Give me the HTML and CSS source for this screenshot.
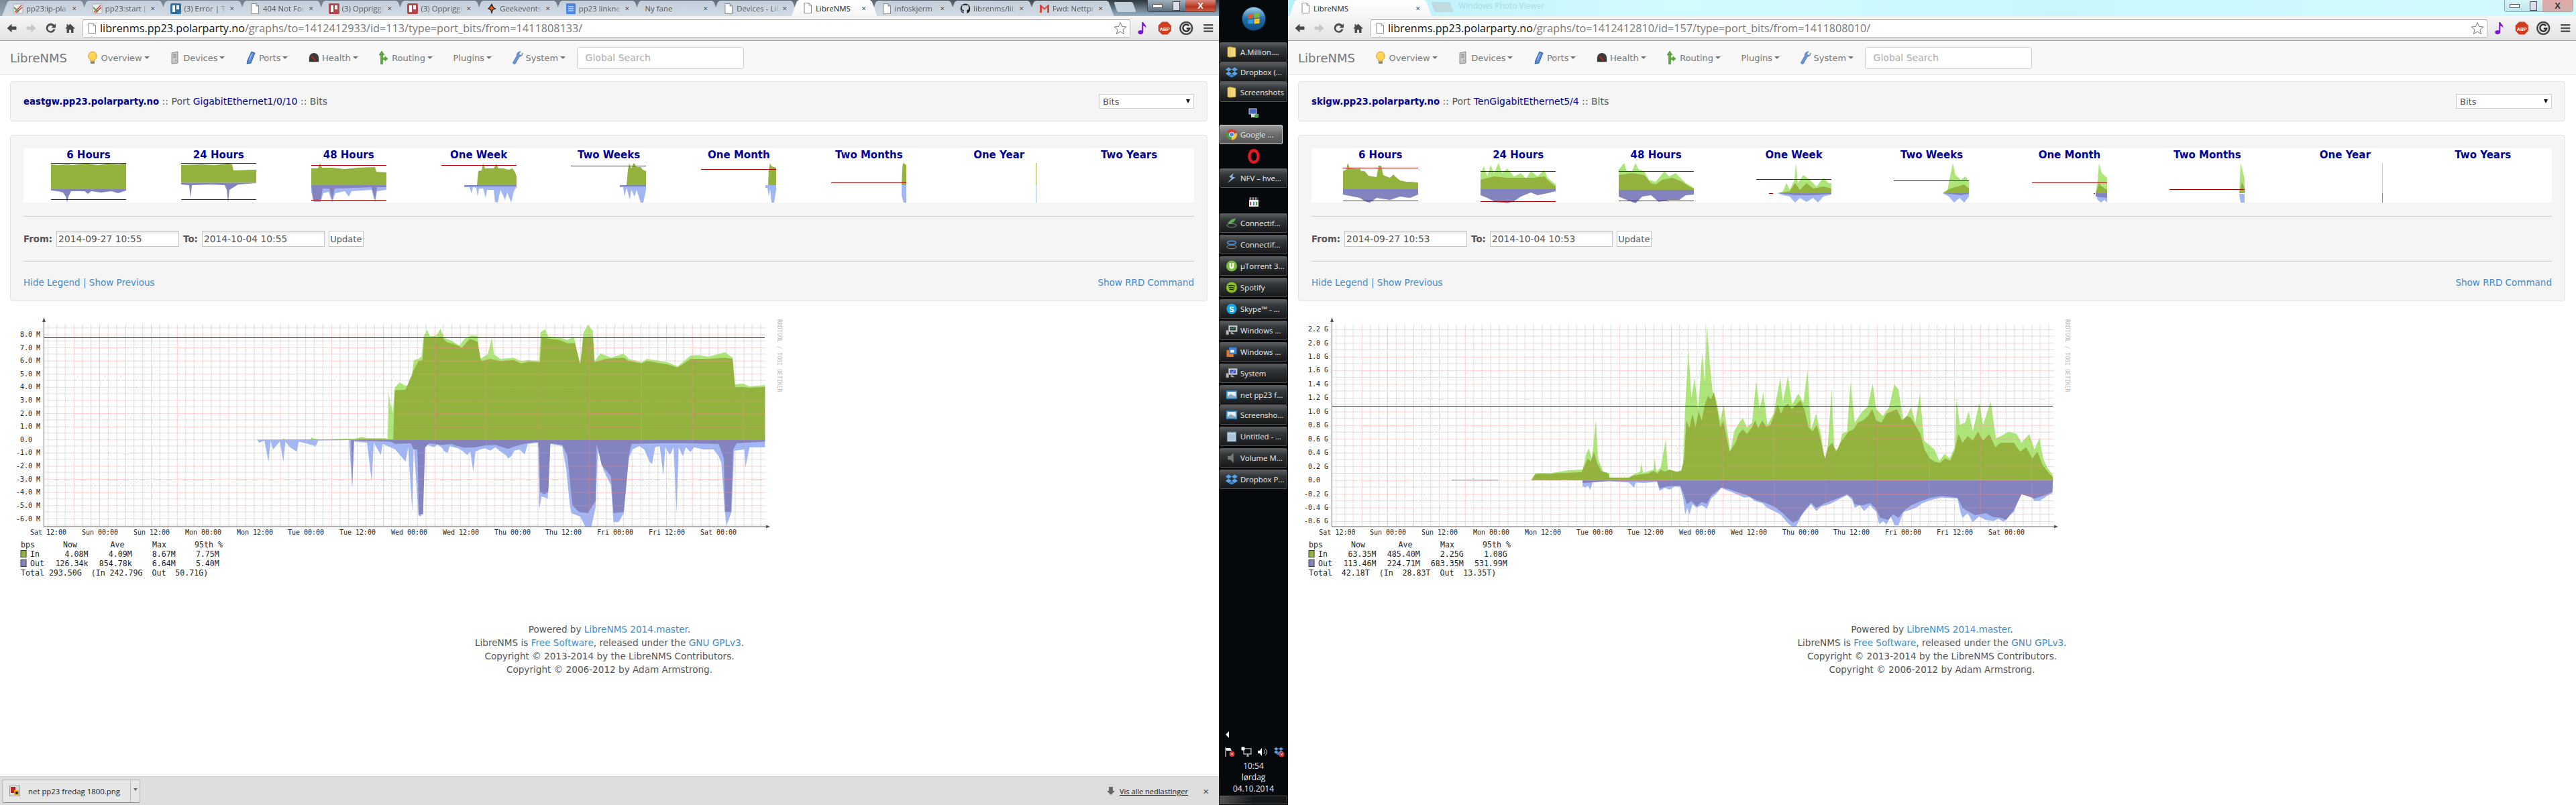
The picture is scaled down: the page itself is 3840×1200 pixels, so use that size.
FILE: index.html
```html
<!DOCTYPE html>
<html lang="no">
<head>
<meta charset="utf-8">
<title>LibreNMS</title>
<link rel="stylesheet" href="styles.css">
</head>
<body>
<svg class="defs" width="0" height="0" aria-hidden="true">
  <defs>
    <symbol id="i-back" viewBox="0 0 16 16"><path d="M1 8 8 1.5V5.5H15V10.5H8V14.5Z"/></symbol>
    <symbol id="i-fwd" viewBox="0 0 16 16"><path d="M15 8 8 1.5V5.5H1V10.5H8V14.5Z"/></symbol>
    <symbol id="i-reload" viewBox="0 0 16 16"><path d="M13.5 3.2A7 7 0 1 0 15 9.5H12A4.2 4.2 0 1 1 11.2 5.4L8.8 7.6H15.5V1Z"/></symbol>
    <symbol id="i-home" viewBox="0 0 16 16"><path d="M8 1.5 15.5 8.5H13V15H9.5V10.5H6.5V15H3V8.5H.5L3 6.2V2H5V4.4Z"/></symbol>
    <symbol id="i-page" viewBox="0 0 16 16"><path d="M3 .5H10L13.5 4V15.5H3Z M10 .5V4H13.5" fill="#fff" stroke="#888"/></symbol>
    <symbol id="i-star" viewBox="0 0 20 20"><path d="M10 1.5 12.5 7.5 19 8 14 12.3 15.6 18.6 10 15.2 4.4 18.6 6 12.3 1 8 7.500 7.500Z" fill="#fff" stroke="#777"/></symbol>
    <symbol id="i-pencil" viewBox="0 0 16 16"><rect x="1" y="1" width="14" height="14" rx="1" fill="#eee" stroke="#aaa"/><path d="M3 13 13 3 M5 14 14 6" stroke="#c33" stroke-width="1.500"/><path d="M2 6 9 13" stroke="#4a4" stroke-width="2"/></symbol>
    <symbol id="i-tr" viewBox="0 0 16 16"><rect width="16" height="16" rx="2" fill="#2f6f9e"/><rect x="3" y="3" width="4" height="10" fill="#fff"/><rect x="9" y="3" width="4" height="6" fill="#fff"/></symbol>
    <symbol id="i-trr" viewBox="0 0 16 16"><rect width="16" height="16" rx="2" fill="#b04a4a"/><rect x="3" y="3" width="4" height="10" fill="#fff"/><rect x="9" y="3" width="4" height="6" fill="#fff"/></symbol>
    <symbol id="i-geek" viewBox="0 0 16 16"><path d="M8 0 11 6 15 8 10 10 8 16 6 10 2 8 5 5Z" fill="#1a1a1a"/><path d="M8 3 10 7 13 8 9 9 8 13 7 9 4 8 6 6Z" fill="#e8641c"/></symbol>
    <symbol id="i-doc" viewBox="0 0 16 16"><rect x="1" width="14" height="16" rx="1" fill="#4a86e8"/><path d="M4 5H12M4 8H12M4 11H12" stroke="#fff"/></symbol>
    <symbol id="i-gh" viewBox="0 0 16 16"><path d="M8 .5A7.500 7.500 0 0 0 5.500 15V12.500C3.500 13 3 11.500 3 11.500 2.500 10.500 2 10.200 2 10.200 1.400 9.700 2.100 9.700 2.100 9.700 3 9.800 3.400 10.600 3.400 10.600 4.200 12 5.500 11.500 5.700 11.200 5.800 10.600 6 10.300 6.200 10.100 4.400 9.900 2.800 9.100 2.800 6.400 2.800 5.500 3.100 4.900 3.600 4.400 3.500 4.200 3.300 3.500 3.700 2.500 3.700 2.500 4.400 2.300 5.800 3.200A6.500 6.500 0 0 1 10.200 3.200C11.600 2.300 12.300 2.500 12.300 2.500 12.700 3.500 12.500 4.200 12.400 4.400 12.900 4.900 13.200 5.500 13.200 6.400 13.200 9.100 11.600 9.900 9.800 10.100 10.100 10.400 10.400 10.900 10.400 11.700V15A7.500 7.500 0 0 0 8 .5Z" fill="#222"/></symbol>
    <symbol id="i-gmail" viewBox="0 0 16 16"><path d="M1 2V14H4V7L8 10.500 12 7V14H15V2H13.500L8 7 2.500 2Z" fill="#d2473a"/><path d="M4 7 8 10.500 12 7V6L8 9.500 4 6Z" fill="#f4c7c0"/></symbol>
    <symbol id="i-note" viewBox="0 0 16 20"><path d="M7 1H9C9.500 4 14 5 13 10 12.500 7.500 10.500 7 9 6.500V16A4 3 0 1 1 7 13.500Z" fill="#7a12d8"/></symbol>
    <symbol id="i-abp" viewBox="0 0 20 20"><path d="M6 .5H14L19.500 6V14L14 19.500H6L.5 14V6Z" fill="#cf3c1e"/><text x="10" y="13.500" class="abp-t">ABP</text></symbol>
    <symbol id="i-g" viewBox="0 0 20 20"><circle cx="10" cy="10" r="9" fill="#eee" stroke="#444" stroke-width="2.500"/><path d="M14 6.500A5 5 0 1 0 15 10.500H10.500" fill="none" stroke="#333" stroke-width="2.500"/></symbol>
    <symbol id="i-menu" viewBox="0 0 16 16"><path d="M1 2H15V4.500H1ZM1 6.800H15V9.300H1ZM1 11.500H15V14H1Z" fill="#555"/></symbol>
    <symbol id="i-bulb" viewBox="0 0 16 20"><path d="M8 1A6.500 6.500 0 0 0 4.800 13V15H11.200V13A6.500 6.500 0 0 0 8 1Z" fill="#fbd35a" stroke="#d9a02a"/><rect x="5" y="15.500" width="6" height="3.500" fill="#888"/></symbol>
    <symbol id="i-device" viewBox="0 0 16 20"><path d="M3 3 12 1V18L3 19Z" fill="#c8c8c8" stroke="#888"/><path d="M5 6H10M5 9H10" stroke="#777"/><circle cx="9" cy="14" r="1" fill="#4a4"/></symbol>
    <symbol id="i-port" viewBox="0 0 16 20"><path d="M9 1 14 3 8 18 2 19 3 14Z" fill="#5b8bd4" stroke="#2f5da5"/><path d="M9 5 6 13" stroke="#bcd4f5"/></symbol>
    <symbol id="i-health" viewBox="0 0 18 20"><path d="M1 17V10A8 8 0 0 1 17 10V17Z" fill="#3a3a3a"/><path d="M5 8 12 15" stroke="#d22" stroke-width="1.500"/></symbol>
    <symbol id="i-route" viewBox="0 0 14 20"><path d="M4 0 8 6H5.500V10L9 10V8L13 11.500 9 15V13H5.500V20H2.500V6H0Z" fill="#5da93c" stroke="#3a7d1f" stroke-width=".5"/></symbol>
    <symbol id="i-wrench" viewBox="0 0 16 20"><path d="M12 1 9.500 4 11 6.500 14 6.500 15 3A5 5 0 0 1 10 8.500L4.500 18.500A2 2 0 0 1 1 16.500L6.500 7A5 5 0 0 1 12 1Z" fill="#6f95d6" stroke="#3e67ad" stroke-width=".7"/></symbol>
    <symbol id="i-folder" viewBox="0 0 16 20"><path d="M1 2 5 1 15 3V18L5 19 1 18Z" fill="#f3d679" stroke="#c9a53e"/><path d="M5 1V19" stroke="#d8b552"/></symbol>
    <symbol id="i-dropbox" viewBox="0 0 20 18"><path d="M5 1 10 4.500 5 8 0 4.500ZM15 1 20 4.500 15 8 10 4.500ZM5 8 10 11.500 5 15 0 11.500ZM15 8 20 11.500 15 15 10 11.500Z" fill="#5aa6ee"/><path d="M5 15.500 10 12.500 15 15.500 10 18Z" fill="#3a86d6"/></symbol>
    <symbol id="i-net" viewBox="0 0 16 16"><rect x="1" y="1" width="11" height="8" fill="#4668c0" stroke="#ccc"/><rect x="4" y="9" width="11" height="5" fill="#ddd"/><circle cx="12" cy="12" r="3" fill="#4a4"/></symbol>
    <symbol id="i-chrome" viewBox="0 0 20 20"><circle cx="10" cy="10" r="9.500" fill="#d33b30"/><path d="M10 10 19 7A9.500 9.500 0 0 1 10 19.500Z" fill="#f6c631"/><path d="M10 10 10 19.500A9.500 9.500 0 0 1 1.500 6Z" fill="#3ba14a"/><circle cx="10" cy="10" r="4.500" fill="#fff"/><circle cx="10" cy="10" r="3.500" fill="#4a86e8"/></symbol>
    <symbol id="i-opera" viewBox="0 0 16 20"><ellipse cx="8" cy="10" rx="6" ry="8" fill="none" stroke="#e01a22" stroke-width="4"/></symbol>
    <symbol id="i-nfv" viewBox="0 0 18 18"><path d="M12 1 5 7 9 9 2 17 15 8 10 7Z" fill="#8fb4dc"/></symbol>
    <symbol id="i-clap" viewBox="0 0 16 16"><rect x="1" y="5" width="14" height="10" fill="#eee"/><path d="M1 1H15V5H1Z" fill="#333"/><path d="M3 1V5M7 1V5M11 1V5" stroke="#eee"/><path d="M3 8V13" stroke="#d33" stroke-width="2"/><path d="M8 8V13" stroke="#38c" stroke-width="2"/><path d="M12 8V13" stroke="#3a3" stroke-width="2"/></symbol>
    <symbol id="i-conn" viewBox="0 0 20 18"><ellipse cx="10" cy="13" rx="8" ry="3" fill="none" stroke="#999"/><path d="M3 9 10 3 17 1 14 7 7 10Z" fill="#5fa85a"/></symbol>
    <symbol id="i-conn2" viewBox="0 0 20 18"><ellipse cx="10" cy="13" rx="8" ry="3" fill="none" stroke="#999"/><ellipse cx="10" cy="6" rx="7" ry="3" fill="none" stroke="#4a86c8" stroke-width="2"/></symbol>
    <symbol id="i-utorrent" viewBox="0 0 20 20"><circle cx="10" cy="10" r="9.500" fill="#7dbb3f"/><path d="M6 5V11A4 4 0 0 0 14 11V5H11V11A1 1 0 0 1 9 11V5Z" fill="#fff"/></symbol>
    <symbol id="i-spotify" viewBox="0 0 20 20"><circle cx="10" cy="10" r="9.500" fill="#8cc11f"/><path d="M4 7C8 6 13 6 16 8M5 10.500C8 9.500 12 10 15 11.500M6 13.500C9 13 11 13 14 14.500" fill="none" stroke="#1c1c1c" stroke-width="1.600"/></symbol>
    <symbol id="i-skype" viewBox="0 0 20 20"><circle cx="10" cy="10" r="9" fill="#13a8e8"/><text x="10" y="15" class="skype-t">S</text></symbol>
    <symbol id="i-monitor" viewBox="0 0 20 18"><rect x="5" y="1" width="14" height="10" fill="#ddd" stroke="#999"/><rect x="7" y="3" width="10" height="6" fill="#234"/><path d="M8 7 10 5 12 7 14 4 16 6" stroke="#5d5" fill="none"/><path d="M1 9H5V16H1ZM9 11V15H15" fill="#bbb" stroke="#888"/></symbol>
    <symbol id="i-vmware" viewBox="0 0 18 18"><rect x="1" y="6" width="11" height="11" fill="#e8761c"/><rect x="5" y="2" width="12" height="11" fill="#3a82d6"/><rect x="7" y="6" width="6" height="4" fill="#fff"/></symbol>
    <symbol id="i-sys" viewBox="0 0 20 18"><rect x="5" y="1" width="14" height="10" fill="#ddd" stroke="#999"/><rect x="7" y="3" width="10" height="6" fill="#3455c8"/><path d="M9 6 11 8 15 4" stroke="#fff" fill="none"/><path d="M1 9H5V16H1ZM9 11V15H15" fill="#bbb" stroke="#888"/></symbol>
    <symbol id="i-photo" viewBox="0 0 20 18"><rect x="1" y="2" width="18" height="14" fill="#2f8fcf"/><rect x="3" y="4" width="14" height="10" fill="#e8eef4"/><path d="M3 12 8 8 17 12V14H3Z" fill="#8aa8c4"/></symbol>
    <symbol id="i-notepad" viewBox="0 0 18 18"><rect x="2" y="2" width="14" height="15" fill="#bcd4e6" stroke="#789"/><path d="M2 2H16" stroke="#357" stroke-width="2" stroke-dasharray="1 1"/><path d="M4 7H14M4 10H14M4 13H14" stroke="#7a99b0"/></symbol>
    <symbol id="i-vol" viewBox="0 0 16 18"><path d="M2 6H6L11 1V17L6 12H2Z" fill="#777"/></symbol>
    <symbol id="i-png" viewBox="0 0 16 16"><rect x=".5" y=".5" width="15" height="15" fill="#ddd" stroke="#999"/><rect x="2" y="2" width="7" height="9" fill="#b5261c"/><rect x="7" y="7" width="7" height="7" fill="#e8a020"/><circle cx="11" cy="11" r="2" fill="#222"/></symbol>
    <symbol id="i-dl" viewBox="0 0 14 14"><path d="M4 1H10V7H13L7 13 1 7H4Z" fill="#666"/></symbol>
    <symbol id="i-flag" viewBox="0 0 16 16"><path d="M2 1V15" stroke="#fff"/><path d="M3 2H9L11 6H3Z" fill="#fff"/><circle cx="11.500" cy="11" r="4" fill="#d33"/><path d="M10 9.500 13 12.500M13 9.500 10 12.500" stroke="#fff"/></symbol>
    <symbol id="i-netw" viewBox="0 0 16 16"><rect x="4" y="3" width="11" height="8" fill="none" stroke="#fff"/><path d="M8 14H12M10 11V14M1 5H5V1H1Z" fill="#fff" stroke="#fff"/></symbol>
    <symbol id="i-spk" viewBox="0 0 16 16"><path d="M1 6H4L7 2V14L4 10H1Z" fill="#fff"/><path d="M10 5A4 4 0 0 1 10 11M12 3A7 7 0 0 1 12 13" stroke="#ccc" fill="none"/></symbol>
    <symbol id="i-dbx" viewBox="0 0 16 16"><use href="#i-dropbox" width="14" height="13"/><circle cx="11.500" cy="11.500" r="4" fill="#d33"/><path d="M10 10 13 13M13 10 10 13" stroke="#fff"/></symbol>
    <linearGradient id="orb" x1="0" y1="0" x2="0" y2="1"><stop offset="0" stop-color="#a9d3ec"/><stop offset=".5" stop-color="#1f6ea8"/><stop offset="1" stop-color="#0f4e80"/></linearGradient>
  </defs>
</svg>

<!-- LEFT BROWSER -->
<section class="win win-left">
  <div class="strip strip-dark">
    <div class="tab"><svg class="fav"><use href="#i-pencil"/></svg><span class="tab-t">pp23:ip-pla</span><span class="tab-x">✕</span></div>
    <div class="tab"><svg class="fav"><use href="#i-pencil"/></svg><span class="tab-t">pp23:start [I</span><span class="tab-x">✕</span></div>
    <div class="tab"><svg class="fav"><use href="#i-tr"/></svg><span class="tab-t">(3) Error | Tr</span><span class="tab-x">✕</span></div>
    <div class="tab"><svg class="fav"><use href="#i-page"/></svg><span class="tab-t">404 Not Fou</span><span class="tab-x">✕</span></div>
    <div class="tab"><svg class="fav"><use href="#i-trr"/></svg><span class="tab-t">(3) Oppriggi</span><span class="tab-x">✕</span></div>
    <div class="tab"><svg class="fav"><use href="#i-trr"/></svg><span class="tab-t">(3) Oppriggi</span><span class="tab-x">✕</span></div>
    <div class="tab"><svg class="fav"><use href="#i-geek"/></svg><span class="tab-t">Geekevents</span><span class="tab-x">✕</span></div>
    <div class="tab"><svg class="fav"><use href="#i-doc"/></svg><span class="tab-t">pp23 linkne</span><span class="tab-x">✕</span></div>
    <div class="tab tab-nofav"><span class="tab-t">Ny fane</span><span class="tab-x">✕</span></div>
    <div class="tab"><svg class="fav"><use href="#i-page"/></svg><span class="tab-t">Devices - Lib</span><span class="tab-x">✕</span></div>
    <div class="tab tab-on"><svg class="fav"><use href="#i-page"/></svg><span class="tab-t">LibreNMS</span><span class="tab-x">✕</span></div>
    <div class="tab"><svg class="fav"><use href="#i-page"/></svg><span class="tab-t">infoskjerm</span><span class="tab-x">✕</span></div>
    <div class="tab"><svg class="fav"><use href="#i-gh"/></svg><span class="tab-t">librenms/lib</span><span class="tab-x">✕</span></div>
    <div class="tab"><svg class="fav"><use href="#i-gmail"/></svg><span class="tab-t">Fwd: Nettpr</span><span class="tab-x">✕</span></div>
    <div class="newtab"></div>
    <div class="winbtns"><span class="wb wb-min"></span><span class="wb wb-max"></span><span class="wb wb-close">X</span></div>
  </div>
  <div class="toolbar">
    <svg class="tb-i"><use href="#i-back" class="c-dark"/></svg>
    <svg class="tb-i"><use href="#i-fwd" class="c-light"/></svg>
    <svg class="tb-i"><use href="#i-reload" class="c-dark"/></svg>
    <svg class="tb-i"><use href="#i-home" class="c-dark"/></svg>
    <div class="addr"><svg class="addr-p"><use href="#i-page"/></svg><span class="url"><b>librenms.pp23.polarparty.no</b>/graphs/to=1412412933/id=113/type=port_bits/from=1411808133/</span><svg class="addr-s"><use href="#i-star"/></svg></div>
    <div class="ext"><svg class="ext-i"><use href="#i-note"/></svg><svg class="ext-i"><use href="#i-abp"/></svg><svg class="ext-i"><use href="#i-g"/></svg><svg class="ext-i ext-m"><use href="#i-menu"/></svg></div>
  </div>
  <nav class="nav">
    <span class="brand">LibreNMS</span>
    <span class="ni"><svg class="ni-i"><use href="#i-bulb"/></svg>Overview<i class="caret"></i></span>
    <span class="ni"><svg class="ni-i"><use href="#i-device"/></svg>Devices<i class="caret"></i></span>
    <span class="ni"><svg class="ni-i"><use href="#i-port"/></svg>Ports<i class="caret"></i></span>
    <span class="ni"><svg class="ni-i"><use href="#i-health"/></svg>Health<i class="caret"></i></span>
    <span class="ni"><svg class="ni-i"><use href="#i-route"/></svg>Routing<i class="caret"></i></span>
    <span class="ni">Plugins<i class="caret"></i></span>
    <span class="ni"><svg class="ni-i"><use href="#i-wrench"/></svg>System<i class="caret"></i></span>
    <span class="search">Global Search</span>
  </nav>
  <div class="content">
    <div class="well well-head">
      <span class="crumb"><a class="host">eastgw.pp23.polarparty.no</a> :: Port <a class="lnk">GigabitEthernet1/0/10</a> :: Bits</span>
      <span class="select">Bits<i class="sel-c"></i></span>
    </div>
    <div class="well well-main">
      <div class="thumbs">
        <div class="th"><div class="th-t">6 Hours</div><svg class="spark" viewBox="0 0 112 59">
          <polygon class="dg" points="0,39 0,2 10,3 25,2 32,3 40,2 55,1 70,3 85,1 100,2 112,1 112,39"/>
          <polygon class="dp" points="0,39 0,41 10,42 18,44 22,50 24,59 26,50 30,42 50,42 55,46 60,42 75,44 90,42 100,45 112,41 112,39"/>
          <path class="pct" d="M0 .5H112M0 54.500H112"/></svg></div>
        <div class="th"><div class="th-t">24 Hours</div><svg class="spark" viewBox="0 0 112 59">
          <polygon class="dg" points="0,29.500 0,3 30,2 50,3 70,1 76,2 78,11 112,10 112,29.500"/>
          <polygon class="dp" points="0,29.500 0,32 12,33 14,52 16,33 45,32 65,33 68,40 70,59 72,40 85,32 112,30 112,29.500"/>
          <path class="pct" d="M0 .5H112M0 54.500H112"/></svg></div>
        <div class="th"><div class="th-t">48 Hours</div><svg class="spark" viewBox="0 0 112 59">
          <polygon class="dg" points="0,33 0,8 10,8 13,0 16,7 30,7 50,9 70,7 95,6 97,13 112,14 112,33"/>
          <polygon class="lb" points="0,33 0,43 4,58 14,58 18,45 26,43 31,59 36,45 50,42 56,50 60,42 90,40 95,59 98,42 112,40 112,33"/>
          <polygon class="dp" points="0,33 3,55 14,55 17,38 27,38 31,55 35,38 90,36 95,55 98,36 112,36 112,33"/>
          <path class="pct" d="M0 3.500H112M0 55.500H112"/></svg></div>
        <div class="th"><div class="th-t">One Week</div><svg class="spark" viewBox="0 0 112 59">
          <polygon class="dg" points="53,33 55,12 60,11 62,0 65,8 72,8 78,8 82,1 85,8 92,8 100,10 106,8 110,14 112,20 112,33"/>
          <polygon class="lb" points="34,33 34,36 42,36 45,46 47,36 52,37 54,50 56,38 62,38 66,52 68,40 78,40 80,58 84,59 88,40 95,55 98,44 104,59 108,42 112,36 112,33"/>
          <polygon class="dp" points="34,33 34,35 112,35 112,33"/>
          <path class="pct" d="M0 3.500H112"/></svg></div>
        <div class="th"><div class="th-t">Two Weeks</div><svg class="spark" viewBox="0 0 112 59">
          <polygon class="dg" points="83,33 85,10 87,1 90,8 94,0 98,6 104,6 107,10 112,12 112,33"/>
          <polygon class="lb" points="73,33 73,36 78,36 80,50 83,37 88,55 90,40 95,50 98,40 104,59 108,59 112,40 112,33"/>
          <polygon class="dp" points="73,33 73,35 112,35 112,33"/>
          <path class="pct" d="M0 4.500H112"/></svg></div>
        <div class="th"><div class="th-t">One Month</div><svg class="spark" viewBox="0 0 112 59">
          <polygon class="dg" points="100,33 101,10 103,0 105,5 112,7 112,33"/>
          <polygon class="lb" points="96,33 96,37 99,37 101,50 103,38 105,59 109,59 112,40 112,33"/>
          <path class="pct" d="M0 9.500H112"/></svg></div>
        <div class="th"><div class="th-t">Two Months</div><svg class="spark" viewBox="0 0 112 59">
          <polygon class="dg" points="105,33 106,10 107,0 112,3 112,33"/>
          <polygon class="lb" points="105,33 105,48 108,59 112,59 112,33"/>
          <path class="pct" d="M0 29.500H112"/></svg></div>
        <div class="th"><div class="th-t">One Year</div><svg class="spark" viewBox="0 0 112 59">
          <polygon class="dg" points="111,33 111,0 112,0 112,33"/>
          <polygon class="lb" points="111,33 111,59 112,59 112,33"/></svg></div>
        <div class="th"><div class="th-t">Two Years</div><svg class="spark" viewBox="0 0 112 59"></svg></div>
      </div>
      <div class="rule"></div>
      <div class="form"><b>From:</b><span class="inp">2014-09-27 10:55</span><b>To:</b><span class="inp">2014-10-04 10:55</span><span class="btn">Update</span></div>
      <div class="rule"></div>
      <div class="links"><span><a class="lk">Hide Legend</a> <a class="lk">|</a> <a class="lk">Show Previous</a></span><a class="lk">Show RRD Command</a></div>
    </div>
  </div>
  <svg class="graph" viewBox="0 0 1200 400">
    <defs>
      <pattern id="gl-min" patternUnits="userSpaceOnUse" x="110.200" y="185.300" width="76.800" height="19.600">
        <path class="g-min" d="M12.800 0V19.600M25.600 0V19.600M38.400 0V19.600M51.200 0V19.600M64 0V19.600M0 9.800H76.800"/>
      </pattern>
      <pattern id="gl-maj" patternUnits="userSpaceOnUse" x="110.200" y="185.300" width="76.800" height="19.600">
        <path class="g-maj" d="M.5 0V19.600M0 .5H76.800"/>
      </pattern>
    </defs>
    <rect x="65" y="13" width="1077" height="302" fill="url(#gl-min)"/>
    <g transform="scale(.7653 .3333)">
      <polygon class="lg" points="500,556 550,556 552,550 556,556 605,556 607,546 612,552 625,556 678,552 690,552 705,544 715,550 740,550 752,550 755,556 757,344 760,392 765,435 769,325 778,300 790,315 800,312 806,200 815,195 821,185 825,95 832,65 838,95 850,90 858,60 865,100 880,115 895,135 905,105 918,90 930,92 935,195 950,175 958,100 962,175 975,195 1000,190 1015,205 1030,200 1050,205 1053,75 1062,62 1068,95 1090,100 1105,110 1118,95 1128,210 1132,215 1136,80 1145,42 1155,70 1158,205 1170,170 1190,190 1215,172 1225,195 1250,210 1260,195 1300,210 1320,228 1345,180 1360,178 1380,185 1412,165 1427,190 1430,310 1447,305 1460,318 1490,312 1490,556"/>
      <polygon class="dg" points="500,556 690,555 700,552 750,553 762,556 766,556 769,335 790,332 806,245 815,205 823,200 826,102 835,98 850,100 860,95 870,120 885,130 900,145 915,105 930,118 937,205 955,195 975,205 1000,200 1015,215 1030,208 1052,210 1055,100 1070,105 1090,110 1105,125 1120,125 1130,218 1136,100 1155,100 1158,210 1180,195 1215,190 1225,205 1250,215 1260,205 1300,220 1320,234 1345,195 1380,195 1412,190 1427,195 1432,322 1447,320 1460,325 1490,320 1490,556"/>
      <polygon class="lb" points="500,556 505,570 515,560 523,655 527,562 532,600 545,565 552,655 556,565 565,590 578,610 582,565 600,575 615,585 620,560 680,558 686,768 690,565 715,570 724,745 728,570 742,625 745,575 770,600 790,655 795,590 803,880 806,580 815,895 820,900 825,600 832,578 845,590 852,578 860,590 866,610 872,615 876,585 884,590 892,595 900,605 910,625 916,610 922,700 926,610 935,600 945,595 955,605 965,590 975,610 985,625 990,640 996,630 1002,605 1012,600 1022,622 1028,575 1048,570 1050,870 1055,810 1067,820 1072,575 1095,585 1103,690 1110,850 1113,885 1130,900 1140,945 1152,945 1160,860 1165,585 1175,690 1190,760 1195,925 1205,925 1215,885 1225,640 1232,600 1245,585 1255,600 1265,655 1270,665 1276,590 1285,585 1292,715 1296,590 1305,625 1312,590 1318,885 1322,590 1330,630 1336,590 1345,612 1352,590 1370,600 1390,600 1400,630 1405,660 1412,880 1415,940 1425,880 1430,605 1450,600 1452,680 1460,590 1490,590 1490,556"/>
      <polygon class="dp" points="500,556 680,558 684,558 686,768 689,560 760,565 770,575 800,572 806,600 813,600 816,890 824,890 828,590 836,572 860,580 880,575 890,585 905,592 925,590 945,582 965,580 990,598 1000,588 1020,575 1040,568 1048,568 1050,600 1052,790 1060,800 1068,790 1072,572 1095,580 1105,625 1115,850 1128,880 1145,885 1160,830 1162,575 1172,670 1190,720 1195,885 1215,880 1225,625 1230,575 1290,572 1340,572 1400,575 1410,640 1412,880 1424,880 1428,600 1435,572 1490,565 1490,556"/>
    </g>
    <rect class="g-top" x="65" y="13" width="1077" height="302" fill="url(#gl-maj)"/>
    <path class="pctl" d="M65 33.500H1140"/>
    <path class="axis" d="M65.500 10V315H1145"/>
    <path class="arrow" d="M63 10 65.500 3 68 10ZM1142 312.500 1148 315 1142 317.500Z"/>
    <g class="ylab">
      <text x="60" y="32">8.0 M</text><text x="60" y="52">7.0 M</text><text x="60" y="71">6.0 M</text><text x="60" y="91">5.0 M</text><text x="60" y="110">4.0 M</text><text x="60" y="130">3.0 M</text><text x="60" y="150">2.0 M</text><text x="60" y="169">1.0 M</text><text x="48" y="189">0.0</text><text x="60" y="208">-1.0 M</text><text x="60" y="228">-2.0 M</text><text x="60" y="248">-3.0 M</text><text x="60" y="267">-4.0 M</text><text x="60" y="287">-5.0 M</text><text x="60" y="307">-6.0 M</text>
    </g>
    <g class="xlab">
      <text x="72" y="327">Sat 12:00</text><text x="149" y="327">Sun 00:00</text><text x="226" y="327">Sun 12:00</text><text x="303" y="327">Mon 00:00</text><text x="380" y="327">Mon 12:00</text><text x="456" y="327">Tue 00:00</text><text x="533" y="327">Tue 12:00</text><text x="610" y="327">Wed 00:00</text><text x="687" y="327">Wed 12:00</text><text x="764" y="327">Thu 00:00</text><text x="840" y="327">Thu 12:00</text><text x="917" y="327">Fri 00:00</text><text x="994" y="327">Fri 12:00</text><text x="1071" y="327">Sat 00:00</text>
    </g>
    <g class="leg">
      <text x="31" y="346">bps</text><text x="94" y="346">Now</text><text x="164.500" y="346">Ave</text><text x="227" y="346">Max</text><text x="290" y="346">95th %</text>
      <rect class="sw-in" x="31" y="350.500" width="8" height="10"/><text x="45" y="360">In</text><text class="end" x="131.500" y="360">4.08M</text><text class="end" x="196.700" y="360">4.09M</text><text class="end" x="261.700" y="360">8.67M</text><text class="end" x="326.800" y="360">7.75M</text>
      <rect class="sw-out" x="31" y="364.500" width="8" height="10"/><text x="45" y="374">Out</text><text class="end" x="131.500" y="374">126.34k</text><text class="end" x="196.700" y="374">854.78k</text><text class="end" x="261.700" y="374">6.64M</text><text class="end" x="326.800" y="374">5.40M</text>
      <text class="pre" x="31" y="388">Total 293.50G  (In 242.79G  Out  50.71G)</text>
    </g>
    <text class="rrd" transform="translate(1159 6) rotate(90)">RRDTOOL / TOBI OETIKER</text>
  </svg>
  <footer class="foot">
    <div>Powered by <a class="lk">LibreNMS 2014.master</a>.</div>
    <div>LibreNMS is <a class="lk">Free Software</a>, released under the <a class="lk">GNU GPLv3</a>.</div>
    <div>Copyright © 2013-2014 by the LibreNMS Contributors.</div>
    <div>Copyright © 2006-2012 by Adam Armstrong.</div>
  </footer>
  <div class="shelf">
    <div class="dl"><svg class="dl-i"><use href="#i-png"/></svg><span class="dl-t">net pp23 fredag 1800.png</span><span class="dl-c"><i class="dl-car"></i></span></div>
    <div class="shelf-r"><svg class="dl-a"><use href="#i-dl"/></svg><a class="dl-all">Vis alle nedlastinger</a><span class="shelf-x">✕</span></div>
  </div>
</section>

<!-- TASKBAR -->
<aside class="taskbar">
  <div class="start"><svg class="orb" viewBox="0 0 40 40"><circle cx="20" cy="20" r="18.500" fill="url(#orb)" stroke="#0a2a44"/><path d="M11 14 19 12V19L11 20Z" fill="#e8562a"/><path d="M20.500 12 29 10V18L20.500 19Z" fill="#7dbb3f"/><path d="M11 21.500 19 20.500V27.500L11 28Z" fill="#2f9ae0"/><path d="M20.500 20.500 29 19.500V27L20.500 28Z" fill="#f6c631"/></svg></div>
  <div class="tg">
    <div class="tb"><svg class="tb-ic"><use href="#i-folder"/></svg>A.Million....</div>
    <div class="tb"><svg class="tb-ic"><use href="#i-dropbox"/></svg>Dropbox (...</div>
    <div class="tb"><svg class="tb-ic"><use href="#i-folder"/></svg>Screenshots</div>
  </div>
  <div class="ti"><svg class="ti-i"><use href="#i-net"/></svg></div>
  <div class="tb tb-on"><svg class="tb-ic"><use href="#i-chrome"/></svg>Google ...</div>
  <div class="ti ti-op"><svg class="ti-i"><use href="#i-opera"/></svg></div>
  <div class="tb tb-s"><svg class="tb-ic"><use href="#i-nfv"/></svg>NFV – hve...</div>
  <div class="ti ti-cl"><svg class="ti-i"><use href="#i-clap"/></svg></div>
  <div class="tb tb-s"><svg class="tb-ic"><use href="#i-conn"/></svg>Connectif...</div>
  <div class="tb tb-s"><svg class="tb-ic"><use href="#i-conn2"/></svg>Connectif...</div>
  <div class="tb tb-s"><svg class="tb-ic"><use href="#i-utorrent"/></svg>µTorrent 3...</div>
  <div class="tb tb-s"><svg class="tb-ic"><use href="#i-spotify"/></svg>Spotify</div>
  <div class="tb tb-s"><svg class="tb-ic"><use href="#i-skype"/></svg>Skype™ - ...</div>
  <div class="tb tb-s"><svg class="tb-ic"><use href="#i-monitor"/></svg>Windows ...</div>
  <div class="tb tb-s"><svg class="tb-ic"><use href="#i-vmware"/></svg>Windows ...</div>
  <div class="tb tb-s"><svg class="tb-ic"><use href="#i-sys"/></svg>System</div>
  <div class="tg tg-s">
    <div class="tb"><svg class="tb-ic"><use href="#i-photo"/></svg>net pp23 f...</div>
    <div class="tb"><svg class="tb-ic"><use href="#i-photo"/></svg>Screensho...</div>
  </div>
  <div class="tb tb-s"><svg class="tb-ic"><use href="#i-notepad"/></svg>Untitled - ...</div>
  <div class="tb tb-s"><svg class="tb-ic"><use href="#i-vol"/></svg>Volume M...</div>
  <div class="tb tb-s"><svg class="tb-ic"><use href="#i-dropbox"/></svg>Dropbox P...</div>
  <div class="tray">
    <i class="tray-t"></i>
    <div class="tray-i"><svg class="tr-i"><use href="#i-flag"/></svg><svg class="tr-i"><use href="#i-netw"/></svg><svg class="tr-i"><use href="#i-spk"/></svg><svg class="tr-i"><use href="#i-dbx"/></svg></div>
    <div class="clock"><div>10:54</div><div>lørdag</div><div>04.10.2014</div></div>
    <div class="showd"></div>
  </div>
</aside>

<!-- RIGHT BROWSER -->
<section class="win win-right">
  <div class="strip strip-light">
    <div class="tab tab-on tab-wide"><svg class="fav"><use href="#i-page"/></svg><span class="tab-t">LibreNMS</span><span class="tab-x">✕</span></div>
    <div class="newtab"></div>
    <span class="ghost">Windows Photo Viewer</span>
    <div class="winbtns winbtns-l"><span class="wb wb-min"></span><span class="wb wb-max"></span><span class="wb wb-close">X</span></div>
  </div>
  <div class="toolbar">
    <svg class="tb-i"><use href="#i-back" class="c-dark"/></svg>
    <svg class="tb-i"><use href="#i-fwd" class="c-light"/></svg>
    <svg class="tb-i"><use href="#i-reload" class="c-dark"/></svg>
    <svg class="tb-i"><use href="#i-home" class="c-dark"/></svg>
    <div class="addr"><svg class="addr-p"><use href="#i-page"/></svg><span class="url"><b>librenms.pp23.polarparty.no</b>/graphs/to=1412412810/id=157/type=port_bits/from=1411808010/</span><svg class="addr-s"><use href="#i-star"/></svg></div>
    <div class="ext"><svg class="ext-i"><use href="#i-note"/></svg><svg class="ext-i"><use href="#i-abp"/></svg><svg class="ext-i"><use href="#i-g"/></svg><svg class="ext-i ext-m"><use href="#i-menu"/></svg></div>
  </div>
  <nav class="nav">
    <span class="brand">LibreNMS</span>
    <span class="ni"><svg class="ni-i"><use href="#i-bulb"/></svg>Overview<i class="caret"></i></span>
    <span class="ni"><svg class="ni-i"><use href="#i-device"/></svg>Devices<i class="caret"></i></span>
    <span class="ni"><svg class="ni-i"><use href="#i-port"/></svg>Ports<i class="caret"></i></span>
    <span class="ni"><svg class="ni-i"><use href="#i-health"/></svg>Health<i class="caret"></i></span>
    <span class="ni"><svg class="ni-i"><use href="#i-route"/></svg>Routing<i class="caret"></i></span>
    <span class="ni">Plugins<i class="caret"></i></span>
    <span class="ni"><svg class="ni-i"><use href="#i-wrench"/></svg>System<i class="caret"></i></span>
    <span class="search">Global Search</span>
  </nav>
  <div class="content">
    <div class="well well-head">
      <span class="crumb"><a class="host">skigw.pp23.polarparty.no</a> :: Port <a class="lnk">TenGigabitEthernet5/4</a> :: Bits</span>
      <span class="select">Bits<i class="sel-c"></i></span>
    </div>
    <div class="well well-main">
      <div class="thumbs">
        <div class="th"><div class="th-t">6 Hours</div><svg class="spark" viewBox="0 0 112 59">
          <polygon class="dg" points="0,39 0,12 5,10 7,0 10,8 22,9 25,8 27,12 32,12 38,19 50,21 53,4 57,4 60,18 70,22 75,17 80,22 85,26 95,28 100,28 112,29 112,39"/>
          <polygon class="dp" points="0,39 0,47 10,49 25,52 35,58 40,59 50,52 70,55 85,50 100,52 112,47 112,39"/>
          <path class="pct" d="M0 7.500H112M0 56.500H112"/></svg></div>
        <div class="th"><div class="th-t">24 Hours</div><svg class="spark" viewBox="0 0 112 59">
          <polygon class="lg" points="0,39 0,15 5,5 10,20 15,3 20,15 27,0 32,15 40,8 50,20 60,15 68,23 75,12 85,20 95,10 100,22 112,32 112,39"/>
          <polygon class="dg" points="0,39 0,25 20,20 40,22 60,22 80,22 95,20 105,30 112,35 112,39"/>
          <polygon class="dp" points="0,39 0,48 10,52 22,58 40,60 50,57 60,50 75,44 85,48 100,45 112,42 112,39"/>
          <path class="pct" d="M0 12.500H112M0 57.500H112"/></svg></div>
        <div class="th"><div class="th-t">48 Hours</div><svg class="spark" viewBox="0 0 112 59">
          <polygon class="lg" points="0,40 0,10 8,0 12,12 20,12 25,0 30,10 38,12 45,25 55,28 62,20 68,12 75,20 85,15 95,25 100,30 112,37 112,40"/>
          <polygon class="dg" points="0,40 0,18 20,15 38,18 48,30 55,32 65,25 80,22 95,28 105,35 112,38 112,40"/>
          <polygon class="dp" points="0,40 0,50 12,55 25,60 35,50 48,48 60,58 75,55 90,55 100,48 112,47 112,40"/>
          <path class="pct" d="M0 12.500H112M0 56.500H112"/></svg></div>
        <div class="th"><div class="th-t">One Week</div><svg class="spark" viewBox="0 0 112 59">
          <polygon class="lg" points="32,45 40,42 45,30 50,40 57,25 59,0 62,30 70,18 80,25 90,35 100,22 108,30 112,30 112,45"/>
          <polygon class="dg" points="32,45 50,42 58,30 65,40 75,30 85,38 100,35 112,38 112,45"/>
          <polygon class="lb" points="32,45 40,48 50,50 58,59 65,52 75,58 85,52 92,59 100,50 112,47 112,45"/>
          <polygon class="dp" points="32,45 58,48 85,48 112,46 112,45"/>
          <path class="pct" d="M0 24.500H112M19 45.500H25"/></svg></div>
        <div class="th"><div class="th-t">Two Weeks</div><svg class="spark" viewBox="0 0 112 59">
          <polygon class="lg" points="73,45 80,40 84,20 88,0 92,18 100,25 107,20 112,28 112,45"/>
          <polygon class="dg" points="73,45 84,38 95,35 105,32 112,38 112,45"/>
          <polygon class="lb" points="73,45 82,50 90,59 98,52 105,59 112,50 112,45"/>
          <polygon class="dp" points="73,45 100,48 112,46 112,45"/>
          <path class="pct" d="M0 26.500H112"/></svg></div>
        <div class="th"><div class="th-t">One Month</div><svg class="spark" viewBox="0 0 112 59">
          <polygon class="lg" points="95,45 98,25 100,0 104,15 112,22 112,45"/>
          <polygon class="dg" points="95,45 100,30 104,35 112,40 112,45"/>
          <polygon class="lb" points="95,46 98,55 103,59 108,55 112,59 112,46"/>
          <polygon class="dp" points="95,45 95,50 112,52 112,45"/>
          <path class="pct" d="M0 29.500H112M92 45.500H94"/></svg></div>
        <div class="th"><div class="th-t">Two Months</div><svg class="spark" viewBox="0 0 112 59">
          <polygon class="lg" points="104,45 105,20 106,0 110,15 112,25 112,45"/>
          <polygon class="dg" points="104,45 108,28 112,38 112,45"/>
          <polygon class="lb" points="104,46 106,59 112,59 112,46"/>
          <path class="pct" d="M0 39.500H112"/></svg></div>
        <div class="th"><div class="th-t">One Year</div><svg class="spark" viewBox="0 0 112 59">
          <polygon class="lg" points="111,45 111,0 112,0 112,45"/>
          <polygon class="dp" points="111,45 111,59 112,59 112,45"/></svg></div>
        <div class="th"><div class="th-t">Two Years</div><svg class="spark" viewBox="0 0 112 59"></svg></div>
      </div>
      <div class="rule"></div>
      <div class="form"><b>From:</b><span class="inp">2014-09-27 10:53</span><b>To:</b><span class="inp">2014-10-04 10:53</span><span class="btn">Update</span></div>
      <div class="rule"></div>
      <div class="links"><span><a class="lk">Hide Legend</a> <a class="lk">|</a> <a class="lk">Show Previous</a></span><a class="lk">Show RRD Command</a></div>
    </div>
  </div>
  <svg class="graph" viewBox="0 0 1200 400">
    <defs>
      <pattern id="gr-min" patternUnits="userSpaceOnUse" x="110.200" y="245.700" width="76.800" height="20.440">
        <path class="g-min" d="M12.800 0V20.440M25.600 0V20.440M38.400 0V20.440M51.200 0V20.440M64 0V20.440M0 10.220H76.800"/>
      </pattern>
      <pattern id="gr-maj" patternUnits="userSpaceOnUse" x="110.200" y="245.700" width="76.800" height="20.440">
        <path class="g-maj" d="M.5 0V20.440M0 .5H76.800"/>
      </pattern>
    </defs>
    <rect x="65" y="13" width="1077" height="302" fill="url(#gr-min)"/>
    <g transform="translate(-20 0) scale(.7653 .3333)">
      <path class="pp" d="M345 737H435"/>
      <polygon class="lg" points="385,737 387,726 390,737"/>
      <polygon class="lg" points="500,737 508,705 540,705 575,692 600,690 607,620 612,595 618,640 626,468 630,640 640,700 652,705 652,725 690,725 700,710 712,700 714,660 718,705 738,690 740,640 744,700 752,680 762,555 766,690 785,700 795,690 800,400 806,155 812,370 818,280 825,420 833,165 838,300 842,45 848,220 853,340 860,375 868,470 875,400 880,490 888,610 895,520 905,480 912,460 920,500 930,480 938,295 945,420 952,345 960,490 972,440 985,280 990,390 1000,270 1008,400 1020,350 1030,390 1038,245 1045,510 1055,440 1065,540 1072,670 1078,570 1085,330 1090,590 1098,610 1105,530 1115,520 1122,300 1130,480 1145,430 1155,410 1165,305 1172,420 1185,450 1197,410 1207,310 1215,330 1225,480 1240,410 1248,480 1257,350 1265,560 1285,600 1295,650 1305,620 1315,640 1325,590 1328,375 1335,490 1345,480 1352,430 1360,520 1373,390 1380,490 1395,385 1405,550 1415,540 1430,520 1445,530 1455,570 1470,530 1480,600 1490,550 1497,640 1505,680 1516,715 1516,737"/>
      <polygon class="dg" points="500,737 508,712 520,708 535,710 550,706 575,704 598,702 604,672 610,640 616,655 622,610 628,660 636,695 650,708 652,726 672,726 690,726 698,718 712,712 728,708 738,696 746,708 752,690 760,700 770,690 782,700 792,696 798,640 802,470 808,505 814,440 820,500 826,430 832,470 838,400 844,360 850,375 856,345 862,420 868,500 874,470 880,540 886,610 892,590 898,570 904,530 912,510 920,530 930,500 936,470 942,505 950,470 958,500 966,490 974,440 980,400 986,440 992,410 1000,395 1008,420 1016,400 1024,380 1032,420 1040,500 1048,520 1056,490 1064,560 1072,640 1078,590 1086,570 1094,610 1102,570 1110,545 1118,520 1128,510 1136,480 1146,470 1156,450 1164,420 1172,470 1182,480 1192,440 1202,430 1212,420 1222,470 1232,450 1240,460 1250,500 1258,530 1266,600 1276,640 1286,655 1296,660 1306,640 1316,650 1324,610 1332,530 1340,570 1350,540 1360,560 1370,520 1380,560 1392,530 1404,590 1414,570 1428,570 1440,570 1452,610 1464,590 1476,640 1486,610 1496,670 1506,700 1516,725 1516,737"/>
      <polygon class="lb" points="600,737 600,765 606,770 610,762 615,780 620,745 650,742 690,748 700,770 704,748 720,750 745,745 750,785 760,772 770,780 780,765 790,768 796,820 800,892 804,860 808,892 814,845 822,860 832,850 842,865 850,820 860,800 870,772 880,782 890,790 900,800 915,815 925,812 935,830 950,840 960,862 970,872 985,890 1000,930 1008,945 1016,945 1025,900 1035,870 1045,845 1055,875 1065,855 1080,845 1090,835 1103,818 1115,805 1125,825 1130,860 1140,850 1148,875 1160,850 1172,880 1178,935 1185,920 1192,935 1200,900 1208,940 1215,940 1225,880 1238,870 1250,860 1262,840 1280,825 1300,815 1330,820 1336,880 1340,905 1350,885 1360,925 1372,900 1385,915 1400,920 1410,910 1420,925 1430,900 1440,880 1450,820 1460,775 1470,800 1480,830 1490,830 1500,815 1515,795 1516,737"/>
      <polygon class="dp" points="600,737 600,750 650,742 745,742 750,775 765,765 790,762 797,800 803,845 812,830 822,855 832,835 842,842 850,808 860,790 870,770 885,778 900,790 920,805 940,828 955,838 975,858 990,885 1000,908 1010,928 1020,915 1030,880 1045,838 1055,862 1070,842 1090,825 1115,800 1125,815 1130,845 1145,850 1160,840 1170,860 1180,905 1195,915 1205,890 1215,905 1228,870 1240,850 1260,830 1280,815 1300,808 1330,815 1340,860 1350,875 1365,895 1385,885 1400,902 1415,905 1425,915 1440,870 1455,800 1468,810 1480,820 1500,805 1515,790 1516,737"/>
    </g>
    <rect class="g-top" x="65" y="13" width="1077" height="302" fill="url(#gr-maj)"/>
    <path class="pctl" d="M65 135.500H1140"/>
    <path class="axis" d="M65.500 10V315H1145"/>
    <path class="arrow" d="M63 10 65.500 3 68 10ZM1142 312.500 1148 315 1142 317.500Z"/>
    <g class="ylab">
      <text x="60" y="24">2.2 G</text><text x="60" y="45">2.0 G</text><text x="60" y="65">1.8 G</text><text x="60" y="85">1.6 G</text><text x="60" y="106">1.4 G</text><text x="60" y="126">1.2 G</text><text x="60" y="147">1.0 G</text><text x="60" y="167">0.8 G</text><text x="60" y="188">0.6 G</text><text x="60" y="208">0.4 G</text><text x="60" y="229">0.2 G</text><text x="48" y="249">0.0</text><text x="60" y="270">-0.2 G</text><text x="60" y="290">-0.4 G</text><text x="60" y="310">-0.6 G</text>
    </g>
    <g class="xlab">
      <text x="73.400" y="327">Sat 12:00</text><text x="149" y="327">Sun 00:00</text><text x="226" y="327">Sun 12:00</text><text x="303" y="327">Mon 00:00</text><text x="380" y="327">Mon 12:00</text><text x="457" y="327">Tue 00:00</text><text x="533" y="327">Tue 12:00</text><text x="610" y="327">Wed 00:00</text><text x="687" y="327">Wed 12:00</text><text x="764" y="327">Thu 00:00</text><text x="840" y="327">Thu 12:00</text><text x="917" y="327">Fri 00:00</text><text x="994" y="327">Fri 12:00</text><text x="1071" y="327">Sat 00:00</text>
    </g>
    <g class="leg">
      <text x="31" y="346">bps</text><text x="94" y="346">Now</text><text x="164.500" y="346">Ave</text><text x="227" y="346">Max</text><text x="290" y="346">95th %</text>
      <rect class="sw-in" x="31" y="350.500" width="8" height="10"/><text x="45" y="360">In</text><text class="end" x="131.500" y="360">63.35M</text><text class="end" x="196.700" y="360">485.40M</text><text class="end" x="261.700" y="360">2.25G</text><text class="end" x="326.800" y="360">1.08G</text>
      <rect class="sw-out" x="31" y="364.500" width="8" height="10"/><text x="45" y="374">Out</text><text class="end" x="131.500" y="374">113.46M</text><text class="end" x="196.700" y="374">224.71M</text><text class="end" x="261.700" y="374">683.35M</text><text class="end" x="326.800" y="374">531.99M</text>
      <text class="pre" x="31" y="388">Total  42.18T  (In  28.83T  Out  13.35T)</text>
    </g>
    <text class="rrd" transform="translate(1159 6) rotate(90)">RRDTOOL / TOBI OETIKER</text>
  </svg>
  <footer class="foot">
    <div>Powered by <a class="lk">LibreNMS 2014.master</a>.</div>
    <div>LibreNMS is <a class="lk">Free Software</a>, released under the <a class="lk">GNU GPLv3</a>.</div>
    <div>Copyright © 2013-2014 by the LibreNMS Contributors.</div>
    <div>Copyright © 2006-2012 by Adam Armstrong.</div>
  </footer>
</section>
</body>
</html>
```
FILE: styles.css
```css
* { box-sizing: border-box; }
html, body { margin: 0; padding: 0; }
body {
  display: flex;
  width: 3840px;
  height: 1200px;
  overflow: hidden;
  background: #fff;
  font-family: "DejaVu Sans", sans-serif;
  font-size: 12px;
  color: #555;
}
.defs { display: block; flex: none; }
.abp-t { font: bold 7px "Liberation Sans", sans-serif; fill: #fff; text-anchor: middle; }
.skype-t { font: bold 13px "Liberation Sans", sans-serif; fill: #fff; text-anchor: middle; }

.win { display: flex; flex-direction: column; flex: none; height: 1200px; overflow: hidden; }
.win-left { width: 1817px; }
.win-right { width: 1920px; }

/* tab strip */
.strip { display: flex; align-items: flex-end; height: 24px; padding-left: 3px; flex: none; }
.strip-dark { background: linear-gradient(90deg, rgba(150,165,178,.75), rgba(120,138,152,.6) 70%, rgba(0,0,0,0) 92%), linear-gradient(#2f363c, #7c95a9 75%, #9fb3c3); }
.strip-light { background: linear-gradient(90deg, #b9eef7, #d2fbff 30%, #c7f7fc 60%, #d4fbff), #cff; padding-left: 2px; }
.tab {
  position: relative;
  display: flex;
  align-items: center;
  flex: none;
  width: 127.7px;
  height: 23px;
  margin-right: -10px;
  padding: 0 14px 0 13px;
  font: 11.400px "Open Sans", sans-serif;
  color: #555;
  background: linear-gradient(#c3cfdb, #d2dbe4);
  clip-path: polygon(0 100%, 8px 2px, 11px 0, calc(100% - 11px) 0, calc(100% - 8px) 2px, 100% 100%);
}
.tab-on { background: linear-gradient(#fff, #f5f5f5); color: #222; z-index: 2; height: 24px; }
.tab-wide { width: 212px; }
.tab-nofav { padding-left: 17px; }
.fav { width: 16px; height: 16px; flex: none; margin: 0 4px 0 3px; }
.tab-t {
  flex: 1;
  min-width: 0;
  overflow: hidden;
  white-space: nowrap;
  -webkit-mask-image: linear-gradient(90deg, #000 85%, transparent);
  mask-image: linear-gradient(90deg, #000 85%, transparent);
}
.tab-on .tab-t, .tab-nofav .tab-t { -webkit-mask-image: none; mask-image: none; }
.tab-x { flex: none; width: 12px; font-size: 9px; text-align: center; color: #555; margin-left: 3px; }
.newtab {
  flex: none;
  width: 28px;
  height: 15px;
  margin: 0 0 6px 12px;
  border-radius: 2px;
  background: #cfdbe6;
  transform: skewX(20deg);
  opacity: .9;
}
.strip-light .newtab { background: #c0d8dc; }
.ghost { margin: 0 0 8px 10px; font: 12px "Open Sans", sans-serif; color: #a5dbe4; align-self: center; }
.winbtns {
  display: flex;
  align-self: flex-start;
  margin-left: auto;
  margin-right: 4px;
  width: 103px;
  height: 18px;
  border: 1px solid #444;
  border-top: 0;
  border-radius: 0 0 4px 4px;
  overflow: hidden;
}
.winbtns-l { border-color: #8aa; }
.wb { display: flex; align-items: center; justify-content: center; width: 28px; background: linear-gradient(#9fb0bd, #5c6e7d); }
.winbtns-l .wb { background: linear-gradient(#d8f4f8, #c0e6ee); }
.wb-min::before { content: ""; width: 13px; height: 4px; background: #fff; border: 1px solid #555; }
.wb-max::before { content: ""; width: 9px; height: 12px; background: #dde; border: 1px solid #444; }
.wb-close { flex: 1; background: linear-gradient(#d98a7c, #b83320 60%, #c9604e); color: #fff; font: bold 13px "Liberation Sans", sans-serif; }
.winbtns-l .wb-close { background: linear-gradient(#e0a8a8, #d2b0b0); color: #333; }

/* toolbar */
.toolbar {
  display: flex;
  align-items: center;
  flex: none;
  height: 37px;
  padding-left: 3px;
  background: linear-gradient(#f6f6f6, #e4e4e4);
  border-bottom: 1px solid #a0a0a0;
}
.tb-i { flex: none; width: 29px; height: 16px; }
.c-dark { fill: #4a4a4a; }
.c-light { fill: #c8c8c8; }
.addr {
  display: flex;
  align-items: center;
  flex: 1;
  min-width: 0;
  height: 27px;
  margin-left: 4px;
  padding: 0 4px 0 5px;
  background: #fff;
  border: 1px solid #bbb;
  border-top-color: #999;
  border-radius: 2px;
}
.addr-p { flex: none; width: 16px; height: 16px; margin-right: 4px; }
.addr-s { flex: none; width: 20px; height: 20px; margin-left: auto; }
.url { font: 16.200px "Open Sans", sans-serif; color: #777; white-space: nowrap; }
.url b { font-weight: 400; color: #111; }
.ext { display: flex; align-items: center; flex: none; margin-left: 2px; }
.ext-i { width: 32.5px; height: 20px; }
.ext-m { height: 16px; }

/* navbar */
.nav {
  display: flex;
  align-items: center;
  flex: none;
  gap: 30.500px;
  height: 51px;
  padding-left: 15px;
  background: #f8f8f8;
  border-bottom: 1px solid #e7e7e7;
}
.brand { font-size: 18px; color: #777; }
.ni { display: inline-flex; align-items: center; font-size: 13px; color: #777; }
.ni-i { width: 16px; height: 20px; margin-right: 4px; flex: none; }
.caret { width: 0; height: 0; margin-left: 3px; border: 4px solid transparent; border-top-color: #777; border-bottom: 0; }
.search {
  display: flex;
  align-items: center;
  width: 249px;
  height: 33px;
  margin-left: -14px;
  padding-left: 12px;
  font-size: 14px;
  color: #aaa;
  background: #fff;
  border: 1px solid #ccc;
  border-radius: 4px;
}

/* content */
.content { flex: none; padding: 9px 17px 0 15px; }
.win-right .content { padding-right: 16px; }
.well { background: #f5f5f5; border: 1px solid #e3e3e3; border-radius: 4px; }
.well-head { display: flex; align-items: center; justify-content: space-between; height: 60px; padding: 0 19px; }
.crumb { font-size: 14px; color: #555; }
.host { font-size: 13.300px; font-weight: 700; color: #000099; }
.lnk { color: #000099; }
.select {
  display: flex;
  align-items: center;
  justify-content: space-between;
  width: 142px;
  height: 22px;
  padding: 0 5px;
  font-size: 13px;
  color: #555;
  background: #fff;
  border: 1px solid #ccc;
}
.win-right .select { width: 143px; }
.sel-c { width: 0; height: 0; border: 3.500px solid transparent; border-top: 6px solid #111; border-bottom: 0; }
.well-main { margin-top: 20px; height: 248px; padding: 19px 19px 0; }
.thumbs { display: grid; grid-template-columns: repeat(9, 1fr); height: 81px; background: #fff; }
.th { display: flex; flex-direction: column; align-items: center; min-width: 0; }
.th-t { height: 22px; font: 700 15px/21px "DejaVu Sans", sans-serif; color: #000099; white-space: nowrap; }
.spark { display: block; width: 112px; height: 59px; overflow: visible; }
.dg { fill: #94b23e; }
.lg { fill: #ade57a; }
.dp { fill: #8383bf; }
.lb { fill: #a2b6f4; }
.pp { stroke: #8383bf; stroke-width: 3; fill: none; }
.pct { stroke: #a80000; stroke-width: 1; fill: none; }
.rule { height: 1px; margin-top: 20px; background: #ccc; }
.form { display: flex; align-items: center; gap: 6px; height: 24px; margin-top: 21px; margin-bottom: 21px; font-size: 13.300px; color: #555; }
.rule + .form + .rule { margin-top: 0; }
.form b { font-weight: 700; color: #555; }
.inp {
  display: flex;
  align-items: center;
  width: 183px;
  height: 24px;
  padding-left: 2px;
  font-size: 13.800px;
  color: #555;
  background: linear-gradient(#e4e4e4, #fff 25%);
  border: 1px solid #c4c4c4;
}
.btn { display: flex; align-items: center; justify-content: center; width: 52px; height: 24px; font-size: 13px; background: #fff; border: 1px solid #c4c4c4; }
.links { display: flex; justify-content: space-between; margin-top: 22px; font-size: 13.500px; line-height: 18px; }
.lk { color: #428bca; }

/* rrd graphs */
.graph { display: block; flex: none; width: 1200px; height: 400px; margin-top: 21px; }
.g-min { stroke: #bbb; stroke-width: 1; stroke-dasharray: 1 1; fill: none; }
.g-maj { stroke: #f58e8e; stroke-width: 1; stroke-dasharray: 1 1; fill: none; }
.g-top { opacity: .75; }
.pctl { stroke: #a00000; stroke-width: 1; fill: none; }
.axis { stroke: #666; stroke-width: 1; fill: none; }
.arrow { fill: #555; }
.ylab text { font: 10px "DejaVu Sans Mono", monospace; fill: #222; text-anchor: end; }
.xlab text { font: 10px "DejaVu Sans Mono", monospace; fill: #222; text-anchor: middle; }
.leg text { font: 11.600px "DejaVu Sans Mono", monospace; fill: #222; }
.leg .end { text-anchor: end; }
.leg .pre { white-space: pre; }
.sw-in { fill: #94b23e; stroke: #333; }
.sw-out { fill: #8383bf; stroke: #333; }
.rrd { font: 8.200px "DejaVu Sans Mono", monospace; fill: #bbb; }

/* footer */
.foot { flex: none; margin-top: 58px; text-align: center; font-size: 13.600px; line-height: 20px; color: #555; }

/* download shelf */
.shelf {
  display: flex;
  align-items: center;
  justify-content: space-between;
  flex: none;
  height: 43px;
  margin-top: auto;
  padding: 0 15px 0 3px;
  background: #dedede;
  border-top: 1px solid #ccc;
}
.dl {
  display: flex;
  align-items: center;
  width: 206px;
  height: 35px;
  padding-left: 10px;
  font: 11.400px "Open Sans", sans-serif;
  color: #222;
  background: #e6e6e6;
  border: 1px solid #bbb;
  border-bottom-color: #888;
  border-radius: 3px;
}
.dl-i { width: 16px; height: 16px; margin-right: 12px; flex: none; }
.dl-t { flex: 1; white-space: nowrap; }
.dl-c { display: flex; justify-content: center; width: 14px; height: 100%; padding-top: 12px; border-left: 1px solid #bbb; }
.dl-car { width: 0; height: 0; border: 3.500px solid transparent; border-top: 4px solid #666; border-bottom: 0; }
.shelf-r { display: flex; align-items: center; font: 11px "Open Sans", sans-serif; }
.dl-a { width: 14px; height: 14px; margin-right: 6px; }
.dl-all { color: #222; text-decoration: underline; margin-right: 22px; }
.shelf-x { font-size: 11px; color: #444; }

/* taskbar */
.taskbar {
  display: flex;
  flex-direction: column;
  flex: none;
  width: 103px;
  height: 1200px;
  padding: 0 1px 0 0;
  font: 11.400px "Open Sans", sans-serif;
  color: #eee;
  background: #05090c;
  border-left: 1px solid #1b2227;
}
.start { display: flex; align-items: center; justify-content: center; flex: none; height: 63px; padding-bottom: 7px; }
.orb { width: 38px; height: 38px; }
.tb {
  display: flex;
  align-items: center;
  flex: none;
  height: 29px;
  padding-left: 8px;
  white-space: nowrap;
  background: linear-gradient(#5a5e61, #33383b 30%, #17191b);
  border: 1px solid #555;
  border-radius: 2px;
}
.tg .tb { height: 29.700px; }
.tb-s { margin-bottom: 3px; }
.tg-s { flex: none; margin-bottom: 3px; }
.tb-on { background: linear-gradient(#9a9a9a, #6c6c6c 50%, #555); border-color: #ddd; margin-right: 7px; }
.tb-ic { width: 18px; height: 17px; margin-right: 4px; flex: none; }
.ti { display: flex; align-items: center; justify-content: center; flex: none; height: 34px; }
.ti-op { height: 36px; }
.ti-cl { height: 35px; }
.ti-i { width: 16px; height: 16px; }
.ti-op .ti-i { width: 18px; height: 22px; }
.tray { display: flex; flex-direction: column; margin-top: auto; align-items: stretch; }
.tray-t { align-self: flex-start; margin-left: 9px; width: 0; height: 0; border: 5px solid transparent; border-right: 5px solid #eee; border-left: 0; }
.tray-i { display: flex; justify-content: space-between; padding: 0 4px 0 7px; margin-top: 13px; }
.tr-i { width: 16px; height: 16px; }
.clock { margin-top: 4px; text-align: center; font-size: 12px; line-height: 17px; color: #eee; }
.showd { height: 13px; margin: 2px 0 1px; background: linear-gradient(100deg, #555, #14181b 50%); border: 1px solid #555; }
```
